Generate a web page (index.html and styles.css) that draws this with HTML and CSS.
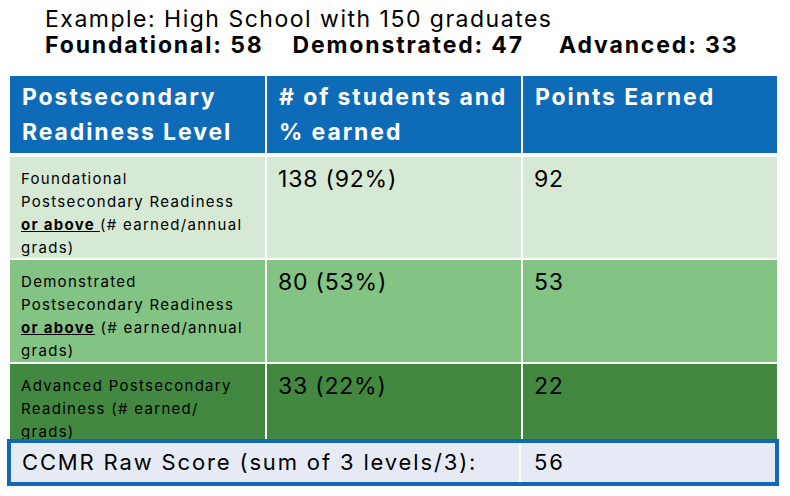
FILE: index.html
```html
<!DOCTYPE html>
<html>
<head>
<meta charset="utf-8">
<link rel="stylesheet" href="styles.css">
</head>
<body>
<div class="intro">
  <div class="intro-line">Example: High School with 150 graduates</div>
  <div class="intro-line bold"><span>Foundational: 58</span><span>Demonstrated: 47</span><span class="adv">Advanced: 33</span></div>
</div>
<div class="table">
  <div class="th">Postsecondary Readiness Level</div>
  <div class="th"># of students and % earned</div>
  <div class="th">Points Earned</div>

  <div class="td label r1">Foundational Postsecondary Readiness <u><b>or above </b></u>(# earned/annual grads)</div>
  <div class="td num r1">138 (92%)</div>
  <div class="td num r1">92</div>

  <div class="td label r2">Demonstrated Postsecondary Readiness <u><b>or above</b></u> (# earned/annual grads)</div>
  <div class="td num r2">80 (53%)</div>
  <div class="td num r2">53</div>

  <div class="td label r3">Advanced Postsecondary Readiness (# earned/ grads)</div>
  <div class="td num r3">33 (22%)</div>
  <div class="td num r3">22</div>
</div>
<div class="total">
  <div class="total-label">CCMR Raw Score (sum of 3 levels/3):</div>
  <div class="total-value">56</div>
</div>
</body>
</html>
```
FILE: styles.css
```css
html, body {
  margin: 0;
  padding: 0;
  background: #ffffff;
}
body {
  width: 790px;
  height: 496px;
  overflow: hidden;
  font-family: Inter, "Noto Sans", sans-serif;
  color: #000;
}
.intro {
  padding: 6px 0 0 45px;
  height: 76px;
  box-sizing: border-box;
}
.intro-line {
  font-size: 23px;
  line-height: 26px;
  letter-spacing: 1.5px;
  white-space: nowrap;
}
.intro-line.bold {
  font-weight: 700;
  letter-spacing: 1.85px;
  display: flex;
  gap: 29px;
}
.intro-line.bold .adv {
  margin-left: 6px;
}
.table {
  margin-left: 10px;
  display: grid;
  grid-template-columns: 255px 254px 254px;
  grid-template-rows: 79px 101px 102px 77px;
  column-gap: 2px;
  row-gap: 2px;
  width: 767px;
}
.th {
  background: #0e6bb8;
  color: #fff;
  font-weight: 700;
  font-size: 23px;
  letter-spacing: 1.9px;
  line-height: 35px;
  padding: 4px 6px 0 12px;
  margin-bottom: 2px;
}
.td {
  padding: 0 8px 0 11px;
}
.label {
  font-size: 15px;
  letter-spacing: 1.3px;
  line-height: 23px;
  padding-top: 10px;
  padding-right: 16px;
}
.num {
  font-size: 23px;
  letter-spacing: 0.8px;
  line-height: 30px;
  padding-top: 7px;
}
.r1 { background: #d5e9d4; }
.r2 { background: #83c383; }
.r3 { background: #428840; }
.total {
  position: relative;
  margin: -2px 0 0 7px;
  width: 772px;
  height: 47px;
  box-sizing: border-box;
  border: 4px solid #1368b6;
  background: #e6eaf4;
  display: grid;
  grid-template-columns: 510px 2px 1fr;
  font-size: 22px;
  letter-spacing: 1.85px;
}
.total-label {
  grid-column: 1;
  padding-left: 11px;
  line-height: 39px;
  white-space: nowrap;
  border-right: 2px solid #ffffff;
}
.total-value {
  grid-column: 3;
  padding-left: 11px;
  line-height: 39px;
}
```
